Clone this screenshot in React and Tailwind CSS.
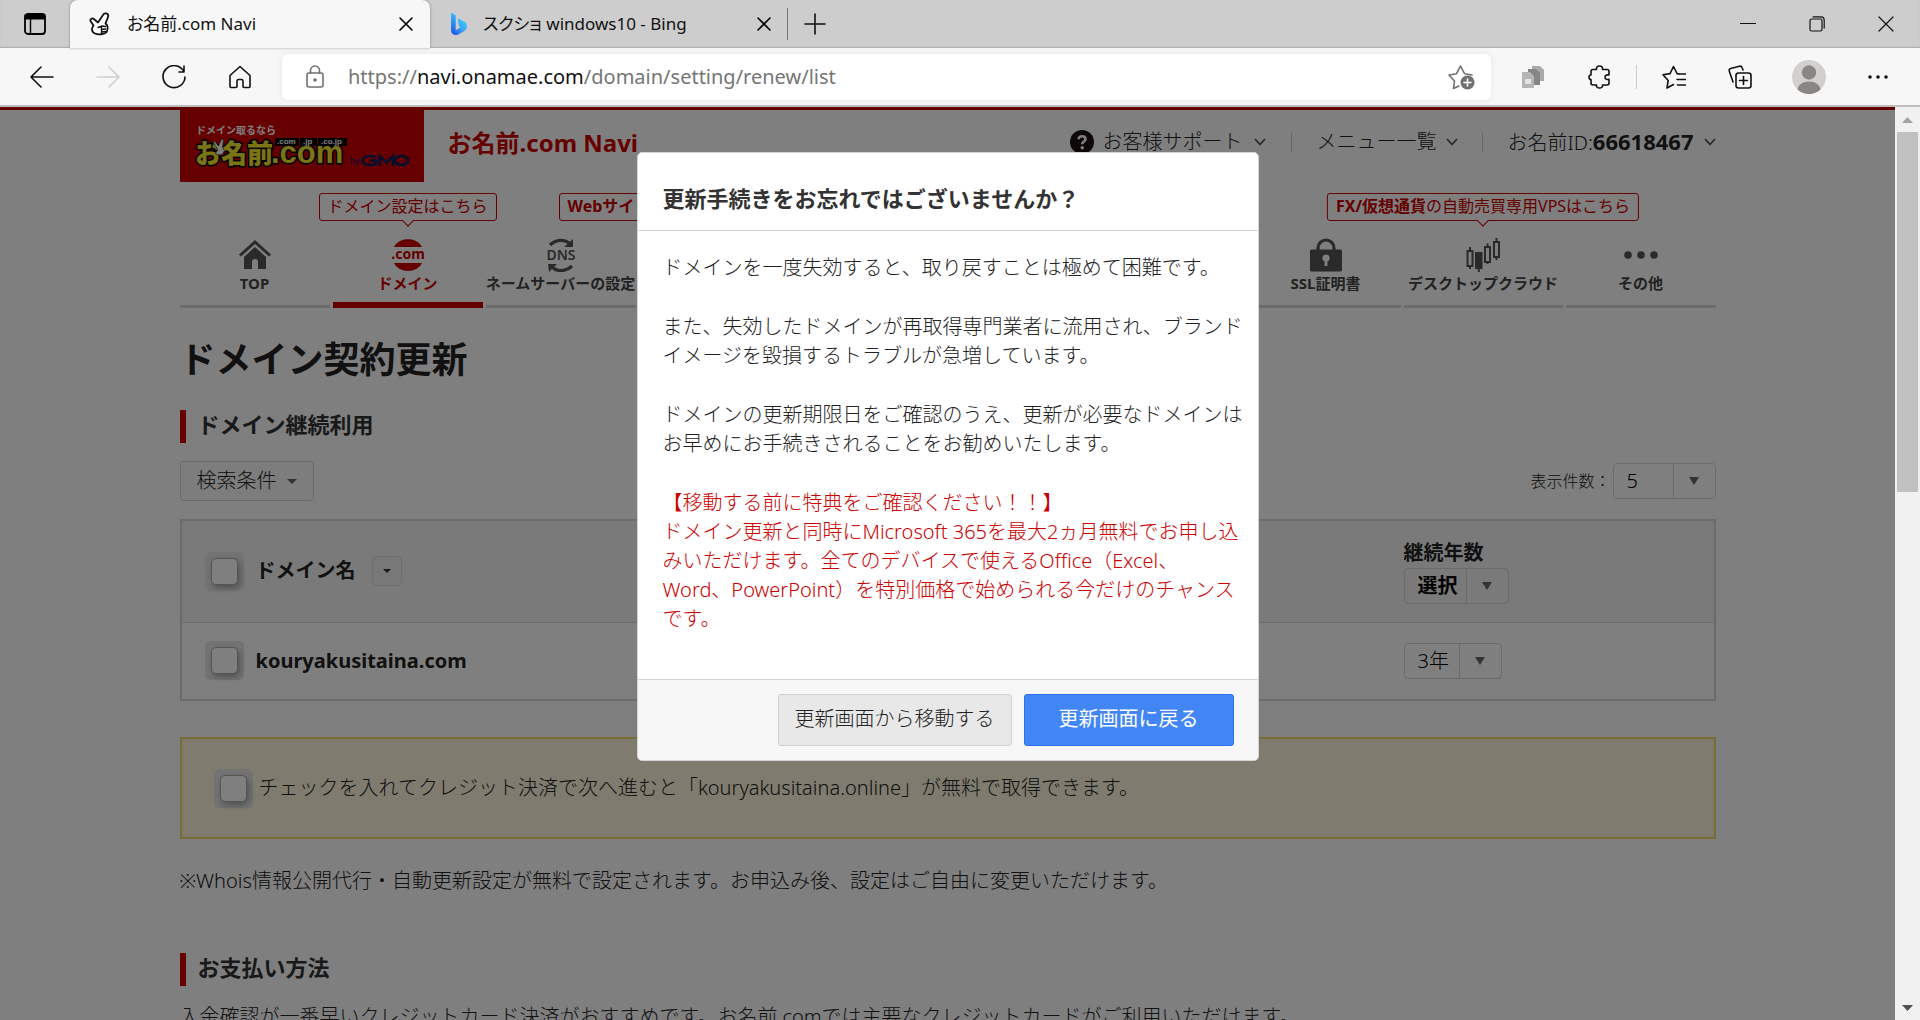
import React from "react";

const stroke = { fill: "none", stroke: "currentColor", strokeWidth: 1.6, strokeLinecap: "round", strokeLinejoin: "round" };

function CloseIcon() {
  return (
    <svg viewBox="0 0 14 14" className="h-3.5 w-3.5" {...stroke}>
      <path d="M1 1l12 12M13 1L1 13" />
    </svg>
  );
}

function HandIcon() {
  return (
    <svg viewBox="0 0 22 24" className="h-6 w-5.5 shrink-0" fill="#fff" stroke="#111" strokeWidth="1.8" strokeLinejoin="round" strokeLinecap="round">
      <path d="M4.500 13.500L1.500 9C.8 7 3.500 5.500 4.800 7l4.200 3.500L14 3c1.300-2.500 5.500-2 5.200 1.200-.2 2-2 4.800-2.700 7.300l1.500 1.500c.8 2 .6 5-.3 7C15.500 22.500 9 23 6 21.500 3.500 20.500 1.500 17.500 4.500 13.500z" />
      <path d="M9 15.500l4-1.500 3.500.5M12.500 14.500v6.500M12.500 17.500l4-.5M12.500 20l4-.5" fill="none" strokeWidth="1.400" />
    </svg>
  );
}

function BingIcon() {
  return (
    <svg viewBox="0 0 16 22" className="h-5.5 w-4 shrink-0">
      <defs>
        <linearGradient id="bingStem" x1="0" y1="0" x2="0" y2="1">
          <stop offset="0" stopColor="#39b9fb" />
          <stop offset="1" stopColor="#1f5fe0" />
        </linearGradient>
        <linearGradient id="bingBowl" x1="0" y1="1" x2="1" y2="0">
          <stop offset="0" stopColor="#1b48ef" />
          <stop offset=".55" stopColor="#3aa7fa" />
          <stop offset="1" stopColor="#3cd9f2" />
        </linearGradient>
      </defs>
      <path d="M0 .5c0-.6.500-.7 1-.4l3 1.700c.6.400.7.800.7 1.400v14.300L1.500 20C.5 19.500 0 18.500 0 17z" fill="url(#bingStem)" />
      <path d="M6.800 6.300c0-.6.500-.8 1-.6l5.200 2.700c2 1 3 2.600 3 4.800 0 1.900-1 3.700-2.700 4.700l-6 3.500C4.500 22.800 1.500 22 .4 19l4.300-1.700 5-3.100c-1-.4-1.500-.9-1.800-1.700z" fill="url(#bingBowl)" />
    </svg>
  );
}

function Tab({ icon, title, active }) {
  return (
    <div
      className={
        active
          ? "flex h-12 w-[360px] items-center rounded-t-lg bg-[#f7f7f7] pl-[19px] pr-[17px] shadow-[0_0_3px_rgba(0,0,0,0.35)]"
          : "flex h-12 w-[357px] items-center pl-[21px] pr-4"
      }
    >
      {icon}
      <span className="ml-4 flex-1 truncate text-[17px] leading-6 text-[#111] [font-feature-settings:'palt']">{title}</span>
      <button aria-label="タブを閉じる"><CloseIcon /></button>
    </div>
  );
}

function ToolButton({ label, children, className = "w-[66px] text-[#111]" }) {
  return (
    <button aria-label={label} className={"flex h-10 items-center justify-center " + className}>
      {children}
    </button>
  );
}

function BrowserChrome() {
  return (
    <header className="relative z-10 shrink-0 border-b-2 border-[#bdbdbd] bg-[#f7f7f7]">
      <div className="flex h-12 items-center bg-[#cdcdcd] shadow-[inset_0_-1px_1px_rgba(0,0,0,0.15)]">
        <button aria-label="タブ操作メニュー" className="flex w-[70px] items-center justify-center">
          <svg viewBox="0 0 22 22" className="h-5.5 w-5.5" {...stroke} strokeWidth="1.8">
            <rect x="1" y="1" width="20" height="20" rx="3" />
            <path d="M1.500 2h19v3.500h-19z" fill="currentColor" />
            <path d="M6.500 6v15" strokeWidth="1.400" />
          </svg>
        </button>
        <Tab active icon={<HandIcon />} title="お名前.com Navi" />
        <Tab icon={<BingIcon />} title="スクショ windows10 - Bing" />
        <div className="h-8 w-px bg-[#777]" />
        <button aria-label="新しいタブ" className="ml-4 text-[#111]">
          <svg viewBox="0 0 22 22" className="h-5.5 w-5.5" {...stroke}><path d="M1 11h20M11 1v20" /></svg>
        </button>
        <div className="flex-1" />
        <div className="flex items-center text-[#111]">
          <button aria-label="最小化" className="flex w-[69px] justify-center">
            <svg viewBox="0 0 16 16" className="h-4 w-4" {...stroke} strokeWidth="1.200"><path d="M0 7.500h16" /></svg>
          </button>
          <button aria-label="元に戻す" className="flex w-[69px] justify-center">
            <svg viewBox="0 0 16 16" className="h-4 w-4" {...stroke} strokeWidth="1.200">
              <rect x="1" y="3" width="12" height="12" rx="1.500" />
              <path d="M4 .8h8c2 0 3.200 1.200 3.200 3.200v8" />
            </svg>
          </button>
          <button aria-label="閉じる" className="flex w-[69px] justify-center">
            <svg viewBox="0 0 16 16" className="h-4 w-4" {...stroke} strokeWidth="1.200"><path d="M1 1l14 14M15 1L1 15" /></svg>
          </button>
        </div>
      </div>

      <div className="flex h-[57px] items-center pl-[9px] pr-[9px]">
        <ToolButton label="戻る">
          <svg viewBox="0 0 24 22" className="h-5.5 w-6" {...stroke}><path d="M23 11H1M11 1L1 11l10 10" /></svg>
        </ToolButton>
        <ToolButton label="進む" className="w-[66px] text-[#cfcfcf]">
          <svg viewBox="0 0 24 22" className="h-5.5 w-6" {...stroke}><path d="M1 11h22M13 1l10 10-10 10" /></svg>
        </ToolButton>
        <ToolButton label="更新">
          <svg viewBox="0 0 24 24" className="h-6 w-6" {...stroke}><path d="M17 7h5V1M22 7A11 11 0 1 0 23 12" /></svg>
        </ToolButton>
        <ToolButton label="ホーム">
          <svg viewBox="0 0 22 24" className="h-6 w-5.5" {...stroke}>
            <path d="M11 1.500L1 10.500V21.500q0 1 1 1h5q1 0 1-1v-5q0-2 1.500-2h3q1.500 0 1.500 2v5q0 1 1 1h5q1 0 1-1V10.500z" />
          </svg>
        </ToolButton>
        <div className="ml-[9px] flex h-[46px] flex-1 items-center rounded-md bg-white pl-6 pr-4 shadow-[0_0_6px_rgba(0,0,0,0.08)]">
          <svg viewBox="0 0 18 24" className="h-6 w-[18px] text-[#707070]" {...stroke}>
            <rect x="1" y="8" width="16" height="14" rx="2" />
            <path d="M4.500 8V5.500a4.500 4.500 0 0 1 9 0V8" />
            <circle cx="9" cy="15" r="1" fill="currentColor" />
          </svg>
          <div className="ml-6 flex-1 text-[20px] leading-7 text-[#757575]">
            https://<span className="text-[#111]">navi.onamae.com</span>/domain/setting/renew/list
          </div>
          <button aria-label="お気に入りに追加" className="text-[#707070]">
            <svg viewBox="0 0 27 26" className="h-[26px] w-[27px]" {...stroke}>
              <path d="M11 22l-5.500 2.500 1-7.500L1 11l7.500-1.300L12.500 2l4 7.700L24 11" />
              <circle cx="19.500" cy="18.500" r="7" fill="currentColor" stroke="none" />
              <path d="M19.500 15v7M16 18.500h7" stroke="#fff" />
            </svg>
          </button>
        </div>
        <ToolButton label="拡張機能のページ" className="ml-[9px] w-[66px] text-[#8d8d8d]">
          <svg viewBox="0 0 22 22" className="h-5.5 w-5.5">
            <path d="M10 0h8l4 4v11H10z" fill="#a9a9a9" />
            <path d="M6 3h8l4 4v12H6z" fill="#858585" />
            <path d="M0 6h8l4 4v12H0z" fill="#b5b5b5" />
            <path d="M3 13h6v5H3z" fill="#e2e2e2" />
          </svg>
        </ToolButton>
        <ToolButton label="拡張機能">
          <svg viewBox="0 0 22 24" className="h-6 w-5.5" {...stroke}>
            <path d="M5 4.500h3.500c-.5-2.200.8-3.500 3-3.500s3.500 1.300 3 3.500H19q2 0 2 2V10c-2.500-.5-4 .5-4 2.200s1.500 2.700 4 2.200V18q0 2-2 2h-4.500c.3 2-1 3-3 3s-3.300-1-3-3H5q-2 0-2-2v-3.500C1.300 14.500 1 13.500 1 12.200S1.500 10 3 10V6.500q0-2 2-2z" />
          </svg>
        </ToolButton>
        <div className="mx-1 h-6 w-px bg-[#ccc]" />
        <ToolButton label="お気に入り">
          <svg viewBox="0 0 24 24" className="h-6 w-6" {...stroke}>
            <path d="M11.500 19.500L5 23l1.200-7.500L1 9.800l7-1.200L11.500 1.500l3.500 7 2 .3M15.500 9H23.500M15 14.500h8.500M15.500 20h8" />
          </svg>
        </ToolButton>
        <ToolButton label="コレクション">
          <svg viewBox="0 0 24 24" className="h-6 w-6" {...stroke}>
            <rect x="8" y="8" width="15" height="15" rx="2.500" />
            <path d="M15.500 11.500v8M11.500 15.500h8M5 17L1.300 6.200C.9 4.800 1.500 3.800 2.700 3.500l8.800-2.300c1.300-.3 2.200.2 2.500 1.300L15 5" />
          </svg>
        </ToolButton>
        <ToolButton label="プロファイル" className="w-[72px]">
          <svg viewBox="0 0 34 34" className="h-[34px] w-[34px]">
            <circle cx="17" cy="17" r="17" fill="#d2d0cd" />
            <circle cx="17" cy="12.500" r="7.200" fill="#8a8683" />
            <path d="M5.500 29.500c1-5 5-8 11.500-8s10.500 3 11.500 8A17 17 0 0 1 17 34a17 17 0 0 1-11.500-4.500z" fill="#8a8683" />
          </svg>
        </ToolButton>
        <ToolButton label="設定など">
          <svg viewBox="0 0 20 4" className="h-1 w-5" fill="currentColor">
            <circle cx="2" cy="2" r="1.800" /><circle cx="10" cy="2" r="1.800" /><circle cx="18" cy="2" r="1.800" />
          </svg>
        </ToolButton>
      </div>
    </header>
  );
}

function Logo() {
  const jp = "'Noto Sans CJK JP', sans-serif";
  return (
    <a href="#top" aria-label="お名前.com by GMO" className="block h-[72px] w-[244px] shrink-0 bg-[#c00]">
      <svg viewBox="0 0 244 72" className="h-full w-full">
        <text x="16" y="24" fontSize="10" fontWeight="700" fill="#fff" fontFamily={jp}>ドメイン取るなら</text>
        <text x="15" y="53" fontSize="26" fontWeight="900" fill="#f5e92c" stroke="#000" strokeWidth="3" paintOrder="stroke" fontFamily={jp}>お名前</text>
        <text x="91" y="53" fontSize="31" fontWeight="800" fill="#f5e92c" stroke="#000" strokeWidth="3" paintOrder="stroke" fontFamily="'Liberation Sans', sans-serif">.com</text>
        <path d="M95 28h24v8H95zM120 28h17v8h-17zM138 28h29v8h-29z" fill="#000" />
        <g fontSize="8" fontWeight="700" fill="#fff" fontFamily="'Liberation Sans', sans-serif">
          <text x="97" y="34">.com</text><text x="123" y="34">.jp</text><text x="141" y="34">.co.jp</text>
        </g>
        <path d="M38 40l-5-8 1.500-1 4 5 3-7 2 .5-1 8 2 3-2 4-5 .5-2-2z" fill="#fff" stroke="#333" strokeWidth=".8" />
        <text x="170" y="54" fontSize="9" fill="#002060" fontFamily="'Liberation Sans', sans-serif">by</text>
        <g fill="none" stroke="#002060" strokeWidth="2.600">
          <path d="M196 47.500c-1.500-1-3.500-1.500-6-1.500-4.500 0-7.500 2-7.500 4.500s3 4.500 7.500 4.500c2.500 0 5-.5 6.500-1.500v-3H190" />
          <path d="M200 56V46.500l6.500 6 6.500-6V56" />
          <ellipse cx="221.500" cy="50.500" rx="6.500" ry="4.500" />
        </g>
      </svg>
    </a>
  );
}

function Chevron() {
  return (
    <svg viewBox="0 0 12 8" className="h-2 w-3" fill="none" stroke="#555" strokeWidth="1.800"><path d="M1 1l5 5.500L11 1" /></svg>
  );
}

const navIcons = {
  top: (
    <svg viewBox="0 0 34 32" className="h-8 w-[34px]" fill="#555">
      <path d="M17 1L1 15.500l2 2L17 5l14 12.500 2-2z" />
      <path d="M17 8L6 18v12h8v-7q0-3 3-3t3 3v7h8V18z" />
    </svg>
  ),
  domain: (
    <svg viewBox="0 0 34 34" className="h-[34px] w-[34px]" fill="#c00">
      <path d="M3 9C8-1.500 26-1.500 31 9zM3 25c5 10.500 23 10.500 28 0z" />
      <text x="17" y="21" textAnchor="middle" fontSize="14" fontWeight="700" fontFamily="'Noto Sans', sans-serif">.com</text>
    </svg>
  ),
  dns: (
    <svg viewBox="0 0 34 34" className="h-[34px] w-[34px]" fill="#555">
      <path d="M6 7C12 1 21 1 26 6" fill="none" stroke="#555" strokeWidth="3.200" />
      <path d="M29 1v8h-9zM4 26h9l-8 8z" />
      <path d="M8 29c5 5 14 5 20-1" fill="none" stroke="#555" strokeWidth="3.200" />
      <text x="17" y="22" textAnchor="middle" fontSize="14" fontWeight="600" fontFamily="'Noto Sans', sans-serif">DNS</text>
    </svg>
  ),
  ssl: (
    <svg viewBox="0 0 32 34" className="h-[34px] w-8">
      <path d="M8 13v-3a8 8 0 0 1 16 0v3" fill="none" stroke="#555" strokeWidth="3.200" />
      <rect y="11.500" width="32" height="22" rx="1.500" fill="#555" />
      <circle cx="16" cy="20" r="3.600" fill="#fff" /><path d="M14.500 21h3v7h-3z" fill="#fff" />
    </svg>
  ),
  cloud: (
    <svg viewBox="0 0 34 34" className="h-[34px] w-[34px]" fill="none" stroke="#555" strokeWidth="2">
      <path d="M1.500 13h5v15h-5zM4 9v4M4 28v3M19 9h5v15h-5zM21.500 5.500V9M21.500 24v2M28 4h5v15h-5zM30.500 0v4M30.500 19v3" />
      <path d="M10 15h5.500v15H10zM12.800 30v4" fill="#555" />
    </svg>
  ),
  other: (
    <svg viewBox="0 0 34 34" className="h-[34px] w-[34px]" fill="#555">
      <circle cx="4" cy="17" r="3.800" /><circle cx="17" cy="17" r="3.800" /><circle cx="30" cy="17" r="3.800" />
    </svg>
  ),
};

function Bubble({ children, className = "left-1/2 -translate-x-1/2" }) {
  return (
    <div className={"absolute bottom-full mb-4 h-7 whitespace-nowrap rounded-[3px] border border-[#c00] bg-white px-2 text-base leading-6 text-[#c00] " + className}>
      {children}
      <span className="absolute -bottom-[5px] left-1/2 h-2 w-2 -translate-x-1/2 rotate-45 border-b border-r border-[#c00] bg-white" />
    </div>
  );
}

const navItems = [
  { icon: "top", label: "TOP" },
  { icon: "domain", label: "ドメイン", active: true, bubble: "ドメイン設定はこちら" },
  { icon: "dns", label: "ネームサーバーの設定" },
  {}, {}, {}, {},
  { icon: "ssl", label: "SSL証明書" },
  { icon: "cloud", label: "デスクトップクラウド", wide: true, bubble: <><b>FX/仮想通貨</b>の自動売買専用VPSはこちら</> },
  { icon: "other", label: "その他" },
];

function SiteNav() {
  return (
    <nav className="mt-[55px] font-normal">
      <ul className="flex gap-[3px]">
        {navItems.map((item, i) => (
          <li key={i} className={item.wide ? "relative min-w-0 flex-[159_1_0%]" : "relative min-w-0 flex-[150_1_0%]"}>
            {item.bubble && <Bubble>{item.bubble}</Bubble>}
            {i === 3 && <Bubble className="right-0 w-[230px]"><b>Webサイト</b></Bubble>}
            <a
              href="#nav"
              className={
                item.active
                  ? "flex h-[71px] flex-col items-center border-b-6 border-[#c00] text-[15px] font-bold leading-5 text-[#c00]"
                  : "flex h-[71px] flex-col items-center border-b-3 border-[#d8d8d8] text-[15px] font-bold leading-5 text-[#444]"
              }
            >
              <span className="flex h-9 items-center">{item.icon && navIcons[item.icon]}</span>
              <span className="whitespace-nowrap">{item.label}</span>
            </a>
          </li>
        ))}
      </ul>
    </nav>
  );
}

function CheckBox({ label, id }) {
  return (
    <span className="flex h-[39px] w-[39px] shrink-0 items-center justify-center rounded-[5px] bg-[#e7e7e7]">
      <input
        id={id}
        type="checkbox"
        aria-label={label}
        className="h-[27px] w-[27px] appearance-none rounded-[5px] border border-[#aaa] bg-white shadow-[2px_3px_6px_rgba(0,0,0,0.3)]"
      />
    </span>
  );
}

function Select({ label, id, options, className, divider }) {
  return (
    <span className={"relative flex h-9 rounded-[4px] border border-[#d6d6d6] " + className}>
      <select id={id} aria-label={label} className="w-full appearance-none bg-transparent pl-[13px] pr-10 text-[20px] leading-8 text-black">
        {options.map((o) => <option key={o}>{o}</option>)}
      </select>
      <span className={"pointer-events-none absolute inset-y-0 right-0 flex items-center justify-center border-l border-[#d6d6d6] " + divider}>
        <svg viewBox="0 0 10 8" className="h-2 w-2.5" fill="#666"><path d="M0 0h10L5 8z" /></svg>
      </span>
    </span>
  );
}

function SectionTitle({ children, className }) {
  return (
    <h2 className={"h-[33px] border-l-6 border-[#c00] pl-3 text-[22px] font-bold leading-7 text-[#333] " + className}>{children}</h2>
  );
}

function SitePage() {
  return (
    <div className="h-full overflow-hidden border-t-3 border-[#c00] bg-white px-16 text-[20px] font-light leading-7 text-[#222]">
      <div className="mx-auto max-w-[1536px]">
        <div className="flex items-start">
          <Logo />
          <p className="ml-6 text-[24px] font-bold leading-[66px] text-[#c00]">お名前.com Navi</p>
          <div className="ml-auto flex h-16 items-center">
            <button className="flex items-center gap-3 pr-[25px]">
              <span className="flex items-center gap-2">
                <svg viewBox="0 0 24 24" className="h-6 w-6">
                  <circle cx="12" cy="12" r="12" fill="#1c1210" />
                  <path d="M8.500 9.200c0-4 7-4 7 0 0 2.300-3.300 2.500-3.300 5" fill="none" stroke="#fff" strokeWidth="2.600" />
                  <circle cx="12.200" cy="17.800" r="1.700" fill="#fff" />
                </svg>
                お客様サポート
              </span>
              <Chevron />
            </button>
            <button className="flex h-[19px] items-center gap-2.5 border-l border-[#ccc] px-6">メニュー一覧 <Chevron /></button>
            <button className="flex h-[19px] items-center gap-2.5 border-l border-[#ccc] pl-6">
              <span>お名前ID:<b className="text-[22px] font-bold">66618467</b></span> <Chevron />
            </button>
          </div>
        </div>

        <SiteNav />

        <h1 className="mt-7 text-[36px] font-bold leading-[48px]">ドメイン契約更新</h1>
        <SectionTitle className="mt-[26px]">ドメイン継続利用</SectionTitle>

        <div className="mt-[18px] flex items-center justify-between">
          <button className="flex h-10 items-center gap-2.5 rounded-[3px] border border-[#d6d6d6] bg-[#fafafa] px-4">
            検索条件
            <svg viewBox="0 0 10 5" className="h-[5px] w-2.5" fill="#666"><path d="M0 0h10L5 5z" /></svg>
          </button>
          <div className="flex items-center gap-0.5">
            <label htmlFor="perPage" className="text-base">表示件数：</label>
            <Select id="perPage" options={["5", "10", "20"]} className="w-[103px]" divider="w-[42px]" />
          </div>
        </div>

        <table className="mt-[18px] w-full border-collapse border-2 border-[#d6d6d6] text-left">
          <thead>
            <tr className="h-[102px] border-b border-[#d6d6d6] bg-[#f5f5f5]">
              <th className="pl-[23px]">
                <div className="flex items-center">
                  <CheckBox label="すべて選択" />
                  <span className="ml-3">ドメイン名</span>
                  <button aria-label="並べ替え" className="ml-4 flex h-[30px] w-[30px] items-center justify-center rounded-[4px] border border-[#ddd] bg-[#f0f0f0]">
                    <svg viewBox="0 0 8 4" className="h-1 w-2" fill="#333"><path d="M0 0h8L4 4z" /></svg>
                  </button>
                </div>
              </th>
              <th className="w-[311px] font-bold">
                <label htmlFor="allYears" className="block leading-[30px]">継続年数</label>
                <Select id="allYears" options={["選択", "1年", "2年", "3年"]} className="w-[105px]" divider="w-[42px]" />
              </th>
            </tr>
          </thead>
          <tbody>
            <tr className="h-[78px]">
              <td className="pl-[23px]">
                <label className="flex items-center gap-3 font-bold">
                  <CheckBox label="kouryakusitaina.com" />
                  kouryakusitaina.com
                </label>
              </td>
              <td>
                <Select label="継続年数" options={["3年", "2年", "1年"]} className="w-[98px]" divider="w-[42px]" />
              </td>
            </tr>
          </tbody>
        </table>

        <div className="mt-9 flex h-[102px] items-center border-2 border-[#f3df6a] bg-[#fff7df] pl-8">
          <label className="flex items-center gap-1.5">
            <CheckBox label="無料ドメインを取得" />
            チェックを入れてクレジット決済で次へ進むと「kouryakusitaina.online」が無料で取得できます。
          </label>
        </div>

        <p className="mt-7 whitespace-nowrap">※Whois情報公開代行・自動更新設定が無料で設定されます。お申込み後、設定はご自由に変更いただけます。</p>
        <SectionTitle className="mt-[58px]">お支払い方法</SectionTitle>
        <p className="mt-[17px] whitespace-nowrap">入金確認が一番早いクレジットカード決済がおすすめです。お名前.comでは主要なクレジットカードがご利用いただけます。</p>
      </div>
    </div>
  );
}

function RenewDialog() {
  return (
    <div className="absolute inset-0 flex items-start justify-center bg-black/50 pt-[45px]">
      <div role="dialog" aria-labelledby="dialogTitle" className="w-[622px] rounded-[5px] border border-[#d4d4d4] bg-white text-[20px] font-light leading-[29px] text-[#222]">
        <h2 id="dialogTitle" className="border-b border-[#d4d4d4] px-[25px] pb-[17px] pt-[31px] text-[22px] font-bold text-[#333]">更新手続きをお忘れではございませんか？</h2>
        <div className="space-y-[30px] whitespace-nowrap px-[25px] pb-[46px] pt-[22px]">
          <p>ドメインを一度失効すると、取り戻すことは極めて困難です。</p>
          <p>また、失効したドメインが再取得専門業者に流用され、ブランド<br />イメージを毀損するトラブルが急増しています。</p>
          <p>ドメインの更新期限日をご確認のうえ、更新が必要なドメインは<br />お早めにお手続きされることをお勧めいたします。</p>
          <p className="text-[#c00]">
            【移動する前に特典をご確認ください！！】<br />
            ドメイン更新と同時にMicrosoft 365を最大2ヵ月無料でお申し込<br />
            みいただけます。全てのデバイスで使えるOffice（Excel、<br />
            Word、PowerPoint）を特別価格で始められる今だけのチャンス<br />
            です。
          </p>
        </div>
        <div className="flex justify-end gap-3 rounded-b-[5px] border-t border-[#d4d4d4] bg-[#f7f7f7] px-6 py-3.5">
          <button className="h-[52px] w-[234px] rounded-[3px] border border-[#d0d0d0] bg-[#e8e8e8] pb-1">更新画面から移動する</button>
          <button className="h-[52px] w-[210px] rounded-[3px] border border-[#2a70f0] bg-[#4285f4] pb-1 font-normal text-white">更新画面に戻る</button>
        </div>
      </div>
    </div>
  );
}

function ScrollBar() {
  return (
    <div className="flex w-[25px] shrink-0 flex-col items-center bg-[#f1f1f1]">
      <svg viewBox="0 0 25 25" className="h-[25px] w-[25px]" fill="#a3a3a3"><path d="M7 16h11l-5.500-6z" /></svg>
      <div className="h-[360px] w-[21px] bg-[#c1c1c1]" />
      <div className="flex-1" />
      <svg viewBox="0 0 25 25" className="h-[25px] w-[25px]" fill="#505050"><path d="M7 10h11l-5.500 6z" /></svg>
    </div>
  );
}

export default function App() {
  return (
    <div className="flex h-screen flex-col overflow-hidden font-['Noto_Sans','Noto_Sans_CJK_JP',sans-serif]">
      <BrowserChrome />
      <main className="flex min-h-0 flex-1">
        <div className="relative min-w-0 flex-1">
          <SitePage />
          <RenewDialog />
        </div>
        <ScrollBar />
      </main>
    </div>
  );
}
